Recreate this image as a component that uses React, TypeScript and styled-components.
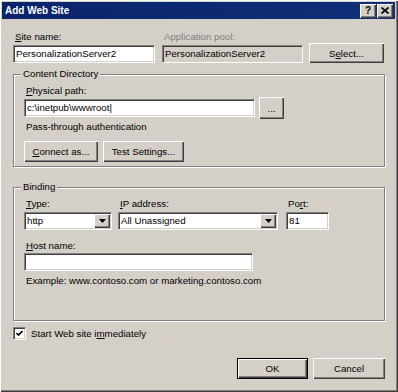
import { createGlobalStyle } from "styled-components";
import styled from "styled-components";
import type { ReactNode } from "react";

const GlobalStyle = createGlobalStyle`
    html, body {
        margin: 0;
        padding: 0;
        background: #d4d0c8;
    }
    * {
        box-sizing: border-box;
    }
`;

const FACE = "#d4d0c8";

const Window = styled.div`
    width: 398px;
    height: 392px;
    padding: 2px 3px 2px 2px;
    background: ${FACE};
    box-shadow: inset 1px 1px 0 #ffffff, inset -1px -1px 0 #404040, inset -2px -2px 0 #808080;
    font-family: "Liberation Sans", Arial, sans-serif;
    font-size: 9.7px;
    color: #000;
    display: flex;
    flex-direction: column;
`;

const TitleBar = styled.div`
    height: 17px;
    background: linear-gradient(90deg, #0a246a, #0f2f78);
    display: flex;
    align-items: center;
    padding: 0 2px 0 3px;
`;

const TitleText = styled.div`
    flex: 1;
    color: #fff;
    font-weight: bold;
    font-size: 10px;
`;

const CaptionButtons = styled.div`
    display: flex;
    gap: 1px;
`;

const CaptionButton = styled.div`
    width: 16px;
    height: 14px;
    background: ${FACE};
    box-shadow: inset 1px 1px 0 #fff, inset -1px -1px 0 #404040, inset -2px -2px 0 #808080;
    display: flex;
    align-items: center;
    justify-content: center;
    font-weight: bold;
    font-size: 10px;
    line-height: 1;
`;

const Body = styled.div`
    flex: 1;
    display: flex;
    flex-direction: column;
    padding: 12px 10px 0 11px;
`;

const TopRow = styled.div`
    display: flex;
    align-items: flex-end;
`;

const Field = styled.div<{ $w: number; $mr?: number }>`
    display: flex;
    flex-direction: column;
    width: ${(p) => p.$w}px;
    margin-right: ${(p) => p.$mr ?? 0}px;
`;

const Label = styled.div<{ $disabled?: boolean; $mb?: number; $mt?: number }>`
    height: 12px;
    line-height: 12px;
    padding-left: 2px;
    white-space: nowrap;
    margin-top: ${(p) => p.$mt ?? 0}px;
    margin-bottom: ${(p) => p.$mb ?? 0}px;
    color: ${(p) => (p.$disabled ? "#808080" : "#000")};
`;

const TextBox = styled.div<{ $w?: number; $disabled?: boolean }>`
    width: ${(p) => (p.$w ? `${p.$w}px` : "100%")};
    height: 18px;
    background: ${(p) => (p.$disabled ? FACE : "#fff")};
    border: 1px solid;
    border-color: #808080 #fff #fff #808080;
    box-shadow: inset 1px 1px 0 #404040, inset -1px -1px 0 ${FACE};
    padding: 0 2px 0 2px;
    line-height: 16px;
    white-space: nowrap;
    overflow: hidden;
`;

const Button = styled.div<{ $w: number; $h?: number; $default?: boolean }>`
    width: ${(p) => p.$w}px;
    height: ${(p) => p.$h ?? 21}px;
    flex: none;
    background: ${FACE};
    display: flex;
    align-items: center;
    justify-content: center;
    white-space: nowrap;
    ${(p) =>
        p.$default
            ? `border: 1px solid #000;
               box-shadow: inset 1px 1px 0 #fff, inset -1px -1px 0 #404040, inset -2px -2px 0 #808080;`
            : `box-shadow: inset 1px 1px 0 #fff, inset -1px -1px 0 #404040, inset -2px -2px 0 #808080;`}
`;

const GroupBox = styled.div<{ $mt: number; $pt: number; $pb: number }>`
    position: relative;
    margin-top: ${(p) => p.$mt}px;
    padding: ${(p) => `${p.$pt}px 10px ${p.$pb}px 10px`};
    border: 1px solid #808080;
    box-shadow: inset 1px 1px 0 #fff, 1px 1px 0 #fff;
    display: flex;
    flex-direction: column;
    align-items: flex-start;
`;

const GroupCaption = styled.div`
    position: absolute;
    top: -7px;
    left: 7px;
    padding: 0 2px;
    line-height: 12px;
    background: ${FACE};
`;

const Row = styled.div<{ $mt?: number; $gap?: number }>`
    display: flex;
    align-items: center;
    gap: ${(p) => p.$gap ?? 0}px;
    margin-top: ${(p) => p.$mt ?? 0}px;
`;

const Note = styled.div<{ $mt: number }>`
    margin-top: ${(p) => p.$mt}px;
    height: 12px;
    line-height: 12px;
    padding-left: 2px;
    white-space: nowrap;
`;

const Combo = styled(TextBox)`
    display: flex;
    align-items: center;
    padding: 0 0 0 2px;
`;

const ComboText = styled.span`
    flex: 1;
`;

const ComboArrow = styled.div`
    width: 16px;
    height: 14px;
    margin-right: 1px;
    background: ${FACE};
    box-shadow: inset 1px 1px 0 #fff, inset -1px -1px 0 #404040, inset -2px -2px 0 #808080;
    display: flex;
    align-items: center;
    justify-content: center;
`;

const CheckRow = styled.label`
    display: flex;
    align-items: center;
    gap: 5px;
    margin-top: 6px;
    height: 13px;
`;

const CheckBox = styled.div`
    width: 13px;
    height: 13px;
    background: #fff;
    border: 1px solid;
    border-color: #808080 #fff #fff #808080;
    box-shadow: inset 1px 1px 0 #404040, inset -1px -1px 0 ${FACE};
    display: flex;
    align-items: center;
    justify-content: center;
`;

const Footer = styled.div`
    display: flex;
    justify-content: flex-end;
    gap: 5px;
    margin-top: 18px;
`;

const U = styled.span`
    text-decoration: underline;
`;

const DownArrow = () => (
    <svg width="7" height="4" viewBox="0 0 7 4">
        <path d="M0 0 H7 L3.5 4 Z" fill="#000" />
    </svg>
);

const Dropdown = ({ w, children }: { w: number; children: ReactNode }) => (
    <Combo $w={w}>
        <ComboText>{children}</ComboText>
        <ComboArrow>
            <DownArrow />
        </ComboArrow>
    </Combo>
);

const App = () => {
    return (
        <>
            <GlobalStyle />
            <Window>
                <TitleBar>
                    <TitleText>Add Web Site</TitleText>
                    <CaptionButtons>
                        <CaptionButton>?</CaptionButton>
                        <CaptionButton>
                            <svg width="8" height="7" viewBox="0 0 8 7">
                                <path d="M0.5 0.5 L7.5 6.5 M7.5 0.5 L0.5 6.5" stroke="#000" strokeWidth="1.6" />
                            </svg>
                        </CaptionButton>
                    </CaptionButtons>
                </TitleBar>

                <Body>
                    <TopRow>
                        <Field $w={142} $mr={7}>
                            <Label $mb={2}><U>S</U>ite name:</Label>
                            <TextBox>PersonalizationServer2</TextBox>
                        </Field>
                        <Field $w={141} $mr={6}>
                            <Label $mb={2} $disabled>Application pool:</Label>
                            <TextBox $disabled>PersonalizationServer2</TextBox>
                        </Field>
                        <Button $w={75} $h={20}>S<U>e</U>lect...</Button>
                    </TopRow>

                    <GroupBox $mt={11} $pt={10} $pb={4}>
                        <GroupCaption>Content Directory</GroupCaption>
                        <Label><U>P</U>hysical path:</Label>
                        <Row $gap={4}>
                            <TextBox $w={231}>c:\inetpub\wwwroot|</TextBox>
                            <Button $w={25} $h={22}>...</Button>
                        </Row>
                        <Note $mt={2}>Pass-through authentication</Note>
                        <Row $mt={8} $gap={5}>
                            <Button $w={74}><U>C</U>onnect as...</Button>
                            <Button $w={81}>Test Settings...</Button>
                        </Row>
                    </GroupBox>

                    <GroupBox $mt={20} $pt={10} $pb={33}>
                        <GroupCaption>Binding</GroupCaption>
                        <TopRow>
                            <Field $w={88} $mr={6}>
                                <Label $mb={2}><U>T</U>ype:</Label>
                                <Dropdown w={88}>http</Dropdown>
                            </Field>
                            <Field $w={160} $mr={8}>
                                <Label $mb={2}><U>I</U>P address:</Label>
                                <Dropdown w={160}>All Unassigned</Dropdown>
                            </Field>
                            <Field $w={43}>
                                <Label $mb={2}>Po<U>r</U>t:</Label>
                                <TextBox>81</TextBox>
                            </Field>
                        </TopRow>
                        <Label $mt={10} $mb={1}><U>H</U>ost name:</Label>
                        <TextBox $w={229} />
                        <Note $mt={4}>Example: www.contoso.com or marketing.contoso.com</Note>
                    </GroupBox>

                    <CheckRow>
                        <CheckBox>
                            <svg width="7" height="7" viewBox="0 0 7 7">
                                <path d="M0.5 3 L2.5 5 L6.5 1" stroke="#000" strokeWidth="1.6" fill="none" />
                            </svg>
                        </CheckBox>
                        <span>Start Web site i<U>m</U>mediately</span>
                    </CheckRow>

                    <Footer>
                        <Button $w={71} $default>OK</Button>
                        <Button $w={72}>Cancel</Button>
                    </Footer>
                </Body>
            </Window>
        </>
    );
};

export default App;
